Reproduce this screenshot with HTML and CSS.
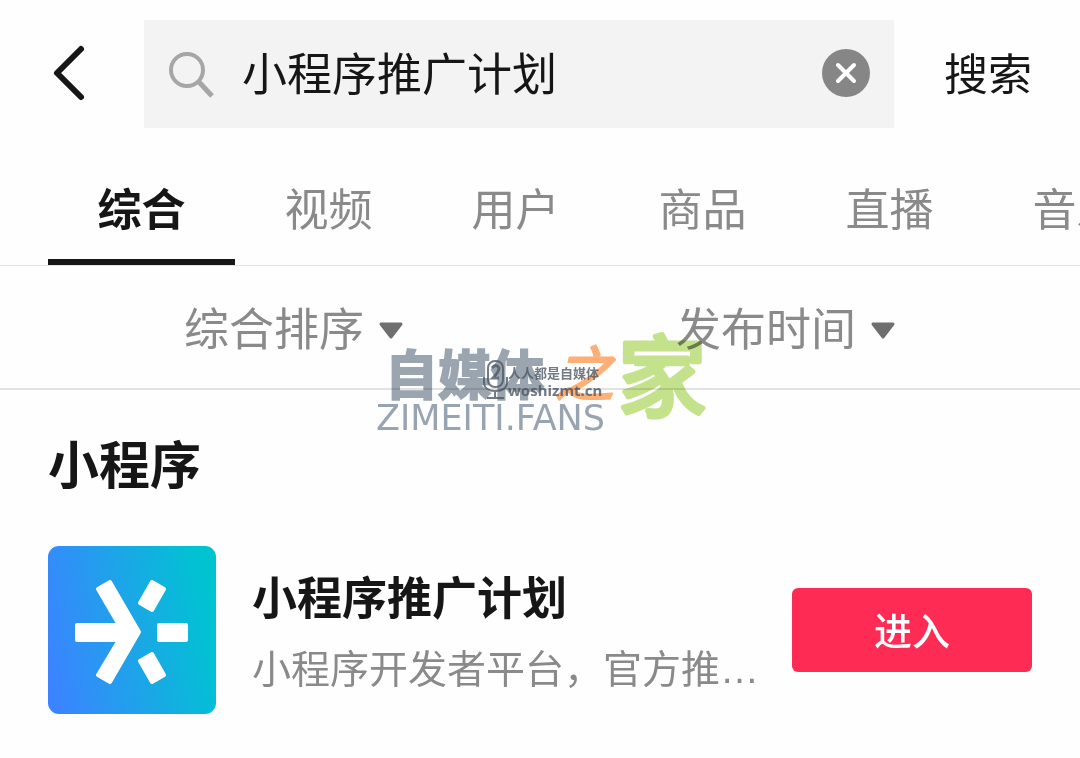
FILE: index.html
```html
<!DOCTYPE html>
<html lang="zh-CN">
<head>
    <meta charset="UTF-8">
    <meta name="viewport" content="width=device-width, initial-scale=1.0">
    <title>小程序推广计划 - 搜索</title>
    <link rel="stylesheet" href="styles.css">
</head>
<body>
    <div class="page">
        <form class="search-bar" onsubmit="return false">
            <button class="back-button" type="button" aria-label="返回">
                <svg width="48" height="60" viewBox="0 0 48 60">
                    <path d="M33 5 L9 29 L33 53" fill="none" stroke="#161616" stroke-width="6" stroke-linecap="round" stroke-linejoin="round"/>
                </svg>
            </button>
            <div class="search-box">
                <svg width="48" height="48" viewBox="0 0 48 48">
                    <circle cx="19" cy="20" r="16" fill="none" stroke="#a6a6a6" stroke-width="4"/>
                    <path d="M31 32 L44 46" stroke="#a6a6a6" stroke-width="5"/>
                </svg>
                <input type="text" id="keyword" value="小程序推广计划" aria-label="搜索内容">
                <button class="clear-button" type="button" aria-label="清空" onclick="clearKeyword()">
                    <svg width="48" height="48" viewBox="0 0 48 48">
                        <circle cx="24" cy="23" r="24" fill="#868686"/>
                        <path d="M16 15 L32 31 M32 15 L16 31" stroke="#fff" stroke-width="4" stroke-linecap="round"/>
                    </svg>
                </button>
            </div>
            <button class="search-button" type="submit">搜索</button>
        </form>

        <nav class="tabs">
            <a class="active" href="#">综合</a>
            <a href="#">视频</a>
            <a href="#">用户</a>
            <a href="#">商品</a>
            <a href="#">直播</a>
            <a href="#">音乐</a>
        </nav>

        <div class="filters">
            <button type="button">综合排序
                <svg width="26" height="18" viewBox="0 0 26 18"><path d="M3 2 H23 L13 15 Z" fill="#6f6f6f" stroke="#6f6f6f" stroke-width="3" stroke-linejoin="round"/></svg>
            </button>
            <button type="button">发布时间
                <svg width="26" height="18" viewBox="0 0 26 18"><path d="M3 2 H23 L13 15 Z" fill="#6f6f6f" stroke="#6f6f6f" stroke-width="3" stroke-linejoin="round"/></svg>
            </button>
        </div>

        <main class="results">
            <h2>小程序</h2>
            <div class="app">
                <svg class="app-icon" width="168" height="168" viewBox="0 0 168 168">
                    <defs>
                        <linearGradient id="appBg" x1="0" y1="0.6" x2="1" y2="0.4">
                            <stop offset="0" stop-color="#3a85ff"/>
                            <stop offset="0.9" stop-color="#04bfd5"/>
                            <stop offset="1" stop-color="#00c3d0"/>
                        </linearGradient>
                    </defs>
                    <rect width="168" height="168" rx="11" fill="url(#appBg)"/>
                    <g fill="#fff" stroke="#fff" stroke-width="4" stroke-linejoin="round">
                        <path d="M29 79 H71 L50 43 L62 36 L91 86 L62 136 L50 129 L71 94 H29 Z"/>
                        <path d="M104 36 L116 43 L104 64 L92 57 Z"/>
                        <path d="M111 79 H138 V94 H111 Z"/>
                        <path d="M104 136 L116 129 L104 108 L92 115 Z"/>
                    </g>
                </svg>
                <div class="app-info">
                    <h3>小程序推广计划</h3>
                    <p>小程序开发者平台，官方推广计划</p>
                </div>
                <button class="enter-button" type="button">进入</button>
            </div>
        </main>

        <!-- site watermark -->
        <svg class="watermark" width="332" height="110" viewBox="0 0 332 110">
            <g opacity="0.9">
                <text class="wm-site" x="9" y="68">自媒体</text>
                <text class="wm-of" x="178" y="69">之</text>
                <text class="wm-home" x="242" y="82">家</text>
                <text class="wm-domain" x="0" y="103">ZIMEITI.FANS</text>
            </g>
            <g fill="none" stroke="#4f5966" stroke-width="2" opacity="0.8">
                <rect x="112" y="34" width="15" height="26" rx="7"/>
                <path d="M108 50 V55 Q108 64 119 64 Q131 64 131 55 V50 M119 64 V70 M111 71 H128"/>
                <path d="M116 41 Q120 36 123 41 Q123 45 117 51 H123" stroke-width="3"/>
            </g>
            <text class="wm-small" x="132" y="51">人人都是自媒体</text>
            <text class="wm-url" x="132" y="69">woshizmt.cn</text>
        </svg>
    </div>

    <script>
        function clearKeyword() {
            const keyword = document.getElementById("keyword");
            keyword.value = "";
            keyword.focus();
        }
    </script>
</body>
</html>
```
FILE: styles.css
```css
* {
    margin: 0;
    padding: 0;
    box-sizing: border-box;
}
body {
    background: #fefefe;
    color: #161616;
    font-family: "Liberation Sans", "Noto Sans CJK SC", sans-serif;
    font-size: 44px;
    line-height: 60px;
}
button, input {
    font: inherit;
    color: inherit;
    background: none;
    border: none;
}
button {
    cursor: pointer;
}
svg {
    display: block;
    flex: none;
    overflow: visible;
}
.page {
    position: relative;
    overflow: hidden;
}
.search-bar {
    display: flex;
    align-items: center;
    padding: 20px 48px 0;
}
.back-button {
    margin-right: 48px;
}
.search-box {
    flex: 1;
    min-width: 0;
    height: 108px;
    display: flex;
    align-items: center;
    padding: 0 24px;
    background: #f3f3f3;
}
.search-box input {
    flex: 1;
    min-width: 0;
    margin: 0 26px;
    padding-top: 4px;
    font-size: 45px;
    outline: none;
}
.search-button {
    margin-left: 50px;
    padding-top: 4px;
    white-space: nowrap;
}
.tabs {
    display: flex;
    padding-left: 48px;
    border-bottom: 1px solid #e2e2e2;
    overflow: hidden;
}
.tabs a {
    flex: none;
    width: 187px;
    padding: 53px 0 18px;
    border-bottom: 6px solid transparent;
    color: #8a8a8a;
    text-align: center;
    text-decoration: none;
}
.tabs .active {
    color: #161616;
    font-weight: bold;
    border-color: #161616;
}
.filters {
    display: flex;
    padding: 35px 48px 27px;
    border-bottom: 2px solid #e2e2e2;
}
.filters button {
    flex: 1;
    display: flex;
    align-items: center;
    justify-content: center;
    gap: 14px;
    color: #8a8a8a;
    font-size: 45px;
}
.results {
    padding: 41px 48px 40px;
}
.results h2 {
    font-size: 51px;
    line-height: 72px;
}
.app {
    display: flex;
    align-items: center;
    margin-top: 43px;
}
.app-info {
    flex: 1;
    min-width: 0;
    margin: 0 32px 0 36px;
    padding-top: 4px;
}
.app-info h3 {
    font-size: 45px;
    line-height: 76px;
}
.app-info p {
    color: #8a8a8a;
    font-size: 39px;
    line-height: 64px;
    white-space: nowrap;
    overflow: hidden;
    text-overflow: ellipsis;
}
.enter-button {
    width: 240px;
    height: 84px;
    padding-top: 4px;
    border-radius: 6px;
    background: #fe2c55;
    color: white;
    font-size: 38px;
    font-weight: 500;
}
.watermark {
    position: absolute;
    top: 327px;
    left: 50%;
    transform: translateX(-50%);
    margin-left: 2px;
    pointer-events: none;
    mix-blend-mode: multiply;
}
.wm-site {
    font-size: 53px;
    font-weight: bold;
    fill: #919da9;
    stroke: #919da9;
    stroke-width: 2px;
}
.wm-of {
    font-size: 60px;
    font-style: italic;
    fill: #ffa868;
    stroke: #ffa868;
    stroke-width: 2px;
    stroke-linejoin: round;
}
.wm-home {
    font-size: 88px;
    fill: #bfdf80;
    stroke: #bfdf80;
    stroke-width: 5px;
    stroke-linejoin: round;
}
.wm-domain {
    font-family: "DejaVu Sans", sans-serif;
    font-size: 35px;
    fill: #8f9cac;
}
.wm-small {
    font-size: 13px;
    font-weight: bold;
    fill: #4f5966;
    opacity: 0.8;
}
.wm-url {
    font-family: "Noto Sans", sans-serif;
    font-size: 15px;
    font-weight: bold;
    fill: #4f5966;
    opacity: 0.8;
}
```
